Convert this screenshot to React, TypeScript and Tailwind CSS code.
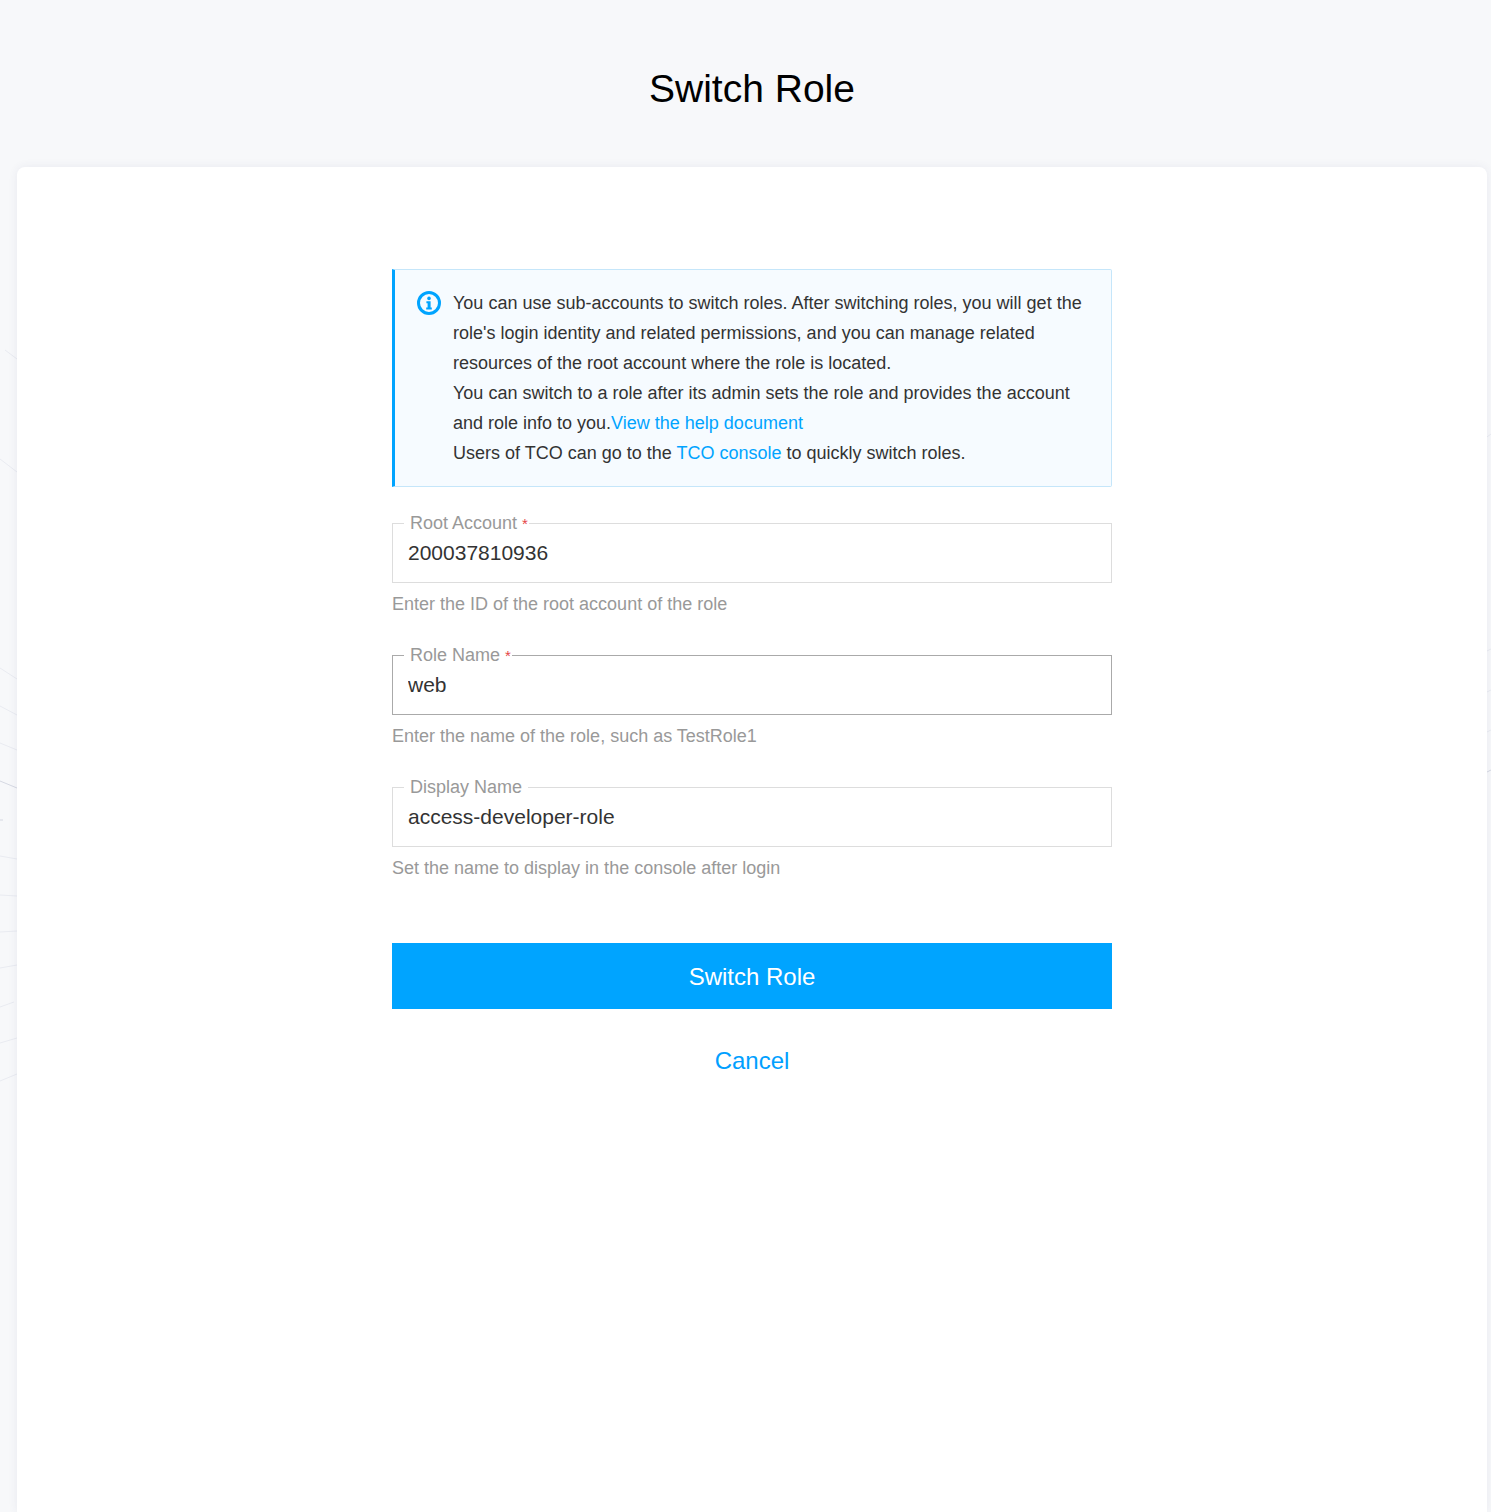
const FONT = "font-['Liberation_Sans',Arial,sans-serif]";

type FieldProps = {
  label: string;
  value: string;
  hint: string;
  required?: boolean;
  active?: boolean;
};

const Field = ({ label, value, hint, required, active }: FieldProps) => {
  return (
    <div>
      <fieldset
        className={
          active
            ? "border border-[#aaaaaa] h-[70px] px-[15px]"
            : "border border-[#dddddd] h-[70px] px-[15px]"
        }
      >
        <legend
          className={
            required
              ? "ml-[-4px] pl-[6px] pr-[1px] h-[20px] text-[18px] leading-[20px] text-[#999999] whitespace-nowrap"
              : "ml-[-4px] px-[6px] h-[20px] text-[18px] leading-[20px] text-[#999999] whitespace-nowrap"
          }
        >
          {label}
          {required && (
            <span className="ml-[5px] text-[15px] text-[#e54545]">*</span>
          )}
        </legend>
        <input
          readOnly
          value={value}
          className="w-full h-[39px] text-[21px] text-[#333333] outline-none bg-transparent"
        />
      </fieldset>
      <p className="mt-[9px] text-[18px] leading-[24px] text-[#999999]">{hint}</p>
    </div>
  );
};

const InfoIcon = () => (
  <svg width="24" height="24" viewBox="0 0 24 24" className="shrink-0 mt-[3px]">
    <circle cx="12" cy="12" r="10.5" fill="none" stroke="#00a4ff" strokeWidth="3" />
    <circle cx="12" cy="7.4" r="1.8" fill="#00a4ff" />
    <path d="M9.4 10.2h4.2v6.2h1.2v2H9.2v-2h1.4v-4.2H9.4z" fill="#00a4ff" />
  </svg>
);

// faint lines of the page background, only visible beside the card
const BackgroundLines = () => (
  <svg
    width="1491"
    height="1512"
    className="absolute inset-0 pointer-events-none"
    fill="none"
    stroke="#e9ebf1"
    strokeWidth="1"
  >
    <path d="M5 350L17 359M0 459L17 472M0 668L17 679M0 706L17 715M0 743L17 750" />
    <path d="M0 856L17 859M0 895L17 896M0 932L17 931M0 968L17 965M0 1007L14 1002M0 1043L17 1038M0 1081L17 1074" />
    <path d="M0 781L17 788M0 820L3 820" stroke="#d5d8e2" />
    <path d="M1487 437L1491 434M1487 651L1491 649M1487 692L1491 690M1487 732L1491 730" />
    <path d="M1487 772L1491 770" stroke="#d5d8e2" />
  </svg>
);

export default function App() {
  return (
    <div className={`${FONT} relative h-[1512px] overflow-hidden bg-[#f7f8fa] pl-[17px] pr-[4px]`}>
      <BackgroundLines />
      <h1 className="relative h-[167px] pt-[65px] text-center text-[39px] leading-[48px] text-black">
        Switch Role
      </h1>

      <div className="relative h-[1345px] rounded-t-[8px] bg-white pt-[102px] shadow-[0_0_10px_rgba(60,70,110,0.08)]">
        <div className="mx-auto w-[720px]">
          <div className="flex gap-[12px] rounded-r-[2px] border border-[#c5e6fa] border-l-[3px] border-l-[#00a4ff] bg-[#f6fbff] pl-[22px] pr-[20px] py-[18px] text-[18px] leading-[30px] text-[#333333]">
            <InfoIcon />
            <div>
              <p>
                You can use sub-accounts to switch roles. After switching roles, you will get the
                role's login identity and related permissions, and you can manage related resources
                of the root account where the role is located.
              </p>
              <p>
                You can switch to a role after its admin sets the role and provides the account and
                role info to you.<a className="text-[#00a4ff]">View the help document</a>
              </p>
              <p>
                Users of TCO can go to the <a className="text-[#00a4ff]">TCO console</a> to quickly
                switch roles.
              </p>
            </div>
          </div>

          <div className="mt-[26px] flex flex-col gap-[29px]">
            <Field
              label="Root Account"
              value="200037810936"
              hint="Enter the ID of the root account of the role"
              required
            />
            <Field
              label="Role Name"
              value="web"
              hint="Enter the name of the role, such as TestRole1"
              required
              active
            />
            <Field
              label="Display Name"
              value="access-developer-role"
              hint="Set the name to display in the console after login"
            />
          </div>

          <button className="mt-[63px] block h-[66px] w-full bg-[#00a4ff] pt-[2px] text-[24px] text-white">
            Switch Role
          </button>
          <a className="mt-[34px] block text-center text-[24px] leading-[36px] text-[#00a0ff]">
            Cancel
          </a>
        </div>
      </div>
    </div>
  );
}
